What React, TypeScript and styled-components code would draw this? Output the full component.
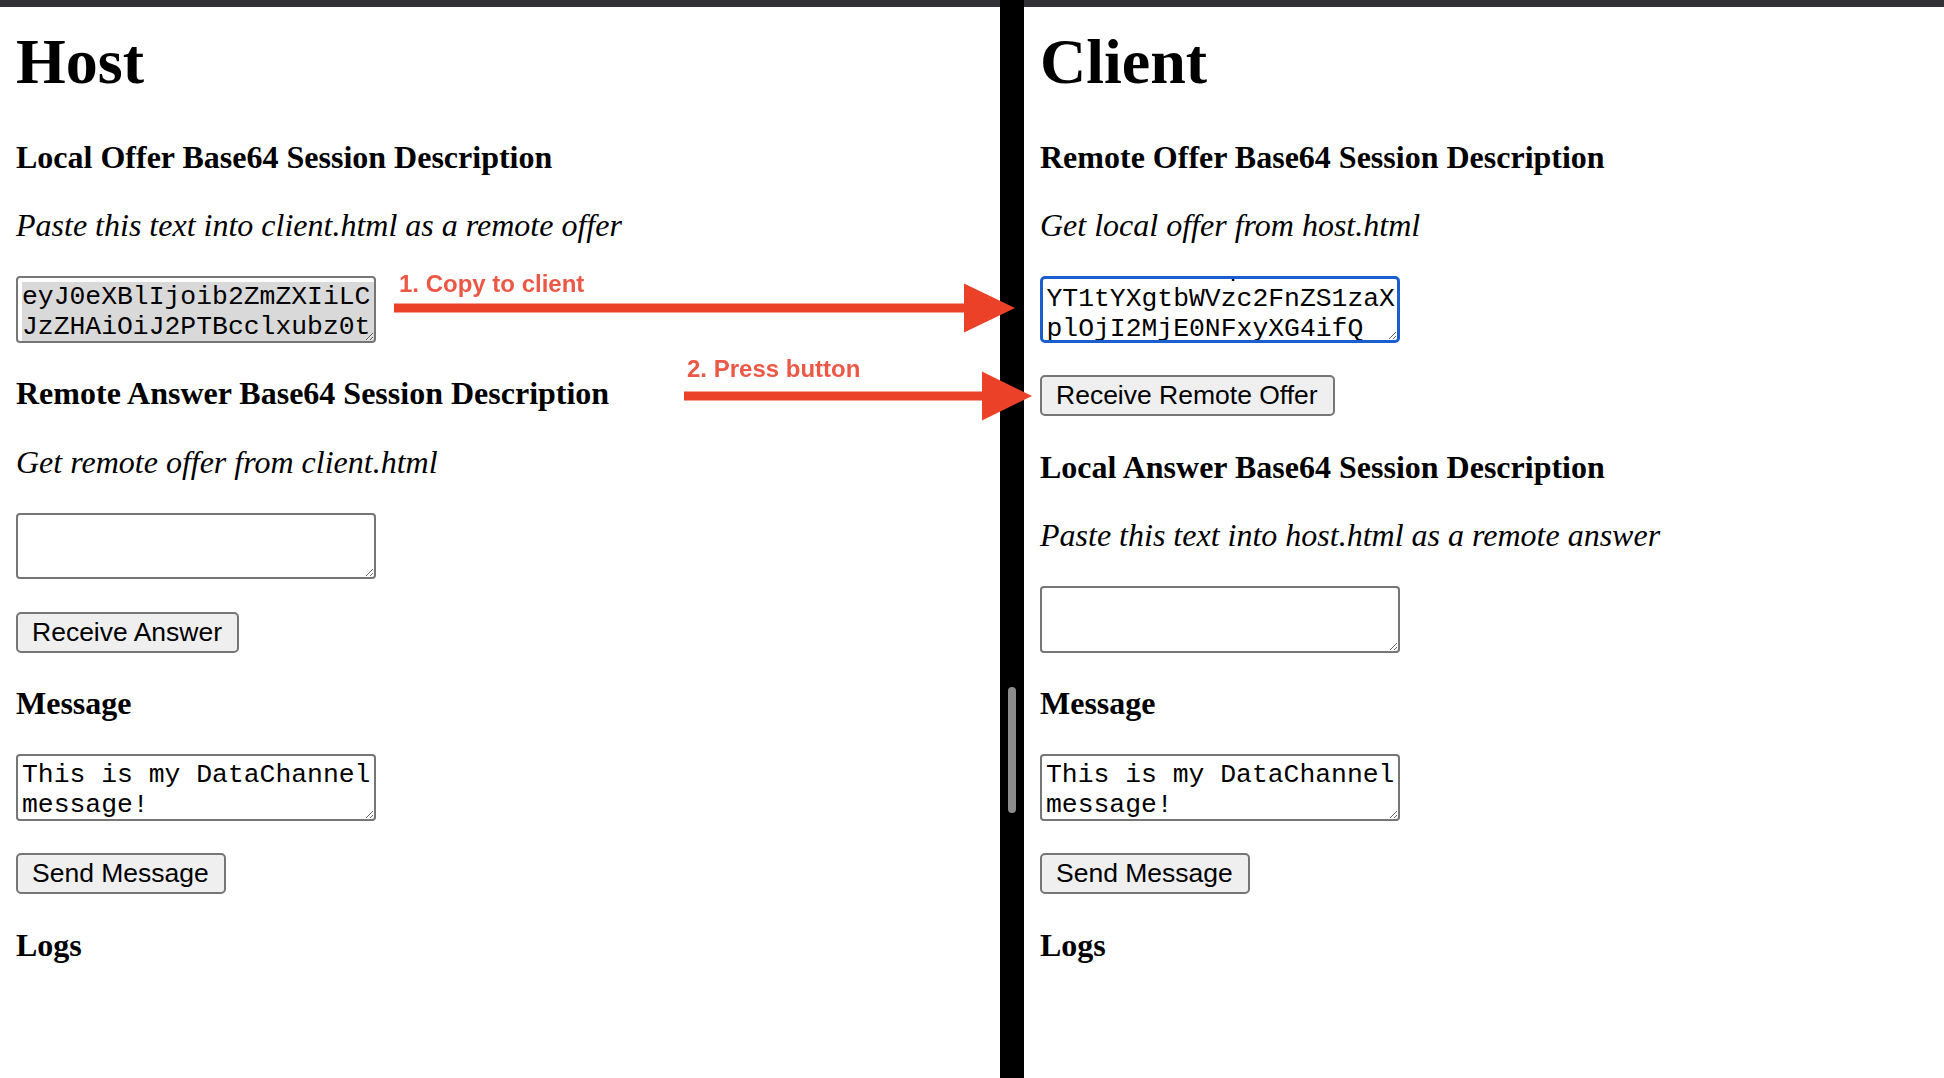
import React, { useLayoutEffect, useRef } from "react";
import styled, { createGlobalStyle, css } from "styled-components";

const GlobalStyle = createGlobalStyle`
  html, body {
    margin: 0;
    padding: 0;
    background: #ffffff;
  }
  body {
    overflow: hidden;
    font-family: "Liberation Serif", "Times New Roman", serif;
    color: #000000;
  }
  *, *::before, *::after {
    box-sizing: border-box;
  }
`;

const Page = styled.div`
  position: relative;
  display: flex;
  width: 1944px;
  height: 1078px;
  overflow: hidden;
  background: #ffffff;
`;

const Pane = styled.section<{ $width?: number }>`
  display: flex;
  flex-direction: column;
  min-width: 0;
  ${(p) => (p.$width ? css`flex: 0 0 ${p.$width}px;` : css`flex: 1 1 auto;`)}
`;

const WindowChrome = styled.div`
  flex: none;
  height: 7px;
  background: #323236;
`;

const Content = styled.div`
  display: flex;
  flex-direction: column;
  align-items: flex-start;
  gap: 32.75px;
  padding: 0 16px;
`;

const Title = styled.h1`
  margin: 19.4px 0 7.5px;
  font-size: 64px;
  line-height: 72px;
  font-weight: 700;
`;

const SectionHeading = styled.h4`
  margin: 0;
  font-size: 32px;
  line-height: 36px;
  font-weight: 700;
`;

const Hint = styled.p`
  margin: 0;
  font-size: 32px;
  line-height: 36px;
  font-style: italic;
`;

const TextBox = styled.textarea<{ $selected?: boolean; $focused?: boolean }>`
  display: block;
  width: 360px;
  height: 66.5px;
  margin: 0;
  padding: 4px 0 4px 4px;
  border: 2px solid #767676;
  border-radius: 4px;
  font-family: "Liberation Mono", "Courier New", monospace;
  font-size: 26.4px;
  line-height: 30px;
  color: #000000;
  background-color: #ffffff;
  word-break: break-all;
  overflow: hidden;
  outline: none;
  resize: both;

  ${(p) =>
    p.$selected &&
    css`
      background-image: linear-gradient(#d9d9d9, #d9d9d9);
      background-repeat: no-repeat;
      background-origin: content-box;
      background-clip: padding-box;
      background-size: 100% 200%;
    `}

  ${(p) =>
    p.$focused &&
    css`
      border: 3px solid #1b5fcf;
      border-radius: 5px;
      padding-left: 3.5px;
      caret-color: #000000;
    `}
`;

const ActionButton = styled.button`
  appearance: none;
  display: inline-flex;
  align-items: center;
  height: 40.5px;
  margin: 0;
  padding: 0 15px 0 14px;
  border: 2px solid #767676;
  border-radius: 5px;
  background: #efefef;
  color: #000000;
  font-family: "Liberation Sans", Arial, Helvetica, sans-serif;
  font-size: 26.5px;
  line-height: normal;
  white-space: nowrap;
  cursor: default;
`;

const Divider = styled.div`
  flex: 0 0 24px;
  display: flex;
  flex-direction: column;
  align-items: center;
  background: #000000;
`;

const ScrollThumb = styled.div`
  width: 8px;
  height: 126px;
  margin-top: 687px;
  border-radius: 4px;
  background: #8c8c8c;
`;

const AnnotationLayer = styled.div`
  position: absolute;
  inset: 0;
  pointer-events: none;
`;

const CalloutLabel = styled.span<{ $x: number; $y: number }>`
  position: absolute;
  left: ${(p) => p.$x}px;
  top: ${(p) => p.$y}px;
  font-family: "Liberation Sans", Arial, Helvetica, sans-serif;
  font-weight: 700;
  font-size: 24px;
  line-height: 24px;
  color: #ec5846;
  white-space: nowrap;
`;

const ArrowCanvas = styled.svg`
  position: absolute;
  left: 0;
  top: 0;
`;

const OFFER_TAIL =
  "LTQzNWYtYjhiNy0xZjQ2ZGNlYmEwZmFcclxuYT1pY2UtdWZyYWc6V2NQbUlSbnlFc1RqdmFHVlxyXG5hPWljZS1wd2Q6ZlBHc3N0dEpJb2VOTGFjdnVTdkdlZ2VhYkxBc2NVbGtcclxuYT1maW5nZXJwcmludDpzaGEtMjU2IDNBOkZFOjE0OkRGOjZBOjE3OjdCOjQ5OjQxOjEyOjY0OkE3OjVFOjg5OjlGOjcx";

const LOCAL_OFFER =
  "eyJ0eXBlIjoib2ZmZXIiLC" +
  "JzZHAiOiJ2PTBcclxubz0t" +
  "IDQ2NzM1MTk3MzY2OTA0MjEwNDUgMTY4NTYwNzA3MiAwIElOIElQNCAwLjAuMC4wXHJcbnM9LVxyXG50PTAgMFxy" +
  OFFER_TAIL;

const FILLER =
  "eyJ0eXBlIjoib2ZmZXIiLCJzZHAiOiJ2PTBcclxubz0tIDQ2NzM1MTk3MzY2OTA0MjEwNDUgMTY4NTYwNzA3MiAwIElOIElQNCAwLjAuMC4wXHJcbnM9LVxyXG50PTAgMFxyXG5hPWdyb3VwOkJVTkRMRSAwXHJcbm09YXBwbGljYXRpb24gOSBVRFAvRFRMUy9TQ1RQIHdlYnJ0Yy1kYXRhY2hhbm5lbFxyXG5jPUlOIElQNCAwLjAuMC4wXHJcbmE9c2V0dXA6YWN0cGFzc1xyXG5hPW1pZDowXHJcbmE9c2VuZHJlY3ZcclxuYT1zY3RwLXBvcn";

const chunk = (s: string, n: number) => {
  const out: string[] = [];
  for (let i = 0; i + n <= s.length; i += n) out.push(s.slice(i, i + n));
  return out;
};

const REMOTE_LINES = [
  ...chunk(FILLER, 22),
  "dHAtcG9ZdDEqNTAwMFxJXG",
  "YT1tYXgtbWVzc2FnZS1zaX",
  "plOjI2MjE0NFxyXG4ifQ",
];
const REMOTE_OFFER = REMOTE_LINES.join("");

const MESSAGE = "This is my DataChannel message!";

const Arrows: React.FC = () => (
  <ArrowCanvas width={1944} height={1078} viewBox="0 0 1944 1078">
    <g fill="#eb4128">
      <rect x={394} y={303.5} width={572} height={9} />
      <polygon points="964,283.5 1015,308 964,332.5" />
      <rect x={684} y={391.5} width={300} height={9} />
      <polygon points="982,371.5 1032,396 982,420.5" />
    </g>
  </ArrowCanvas>
);

const HostPane: React.FC = () => (
  <Pane $width={1000}>
    <WindowChrome />
    <Content>
      <Title>Host</Title>
      <SectionHeading>Local Offer Base64 Session Description</SectionHeading>
      <Hint>Paste this text into client.html as a remote offer</Hint>
      <TextBox $selected readOnly defaultValue={LOCAL_OFFER} spellCheck={false} />
      <SectionHeading>Remote Answer Base64 Session Description</SectionHeading>
      <Hint>Get remote offer from client.html</Hint>
      <TextBox defaultValue="" spellCheck={false} />
      <ActionButton type="button">Receive Answer</ActionButton>
      <SectionHeading>Message</SectionHeading>
      <TextBox defaultValue={MESSAGE} spellCheck={false} />
      <ActionButton type="button">Send Message</ActionButton>
      <SectionHeading>Logs</SectionHeading>
    </Content>
  </Pane>
);

const ClientPane: React.FC = () => {
  const offerRef = useRef<HTMLTextAreaElement>(null);

  useLayoutEffect(() => {
    const el = offerRef.current;
    if (!el) return;
    try {
      el.focus({ preventScroll: true });
      el.setSelectionRange(el.value.length, el.value.length);
    } catch {
      /* ignore */
    }
    el.scrollTop = 30 * (REMOTE_LINES.length - 2) - 1;
  }, []);

  return (
    <Pane>
      <WindowChrome />
      <Content>
        <Title>Client</Title>
        <SectionHeading>Remote Offer Base64 Session Description</SectionHeading>
        <Hint>Get local offer from host.html</Hint>
        <TextBox ref={offerRef} $focused defaultValue={REMOTE_OFFER} spellCheck={false} />
        <ActionButton type="button">Receive Remote Offer</ActionButton>
        <SectionHeading>Local Answer Base64 Session Description</SectionHeading>
        <Hint>Paste this text into host.html as a remote answer</Hint>
        <TextBox readOnly defaultValue="" spellCheck={false} />
        <SectionHeading>Message</SectionHeading>
        <TextBox defaultValue={MESSAGE} spellCheck={false} />
        <ActionButton type="button">Send Message</ActionButton>
        <SectionHeading>Logs</SectionHeading>
      </Content>
    </Pane>
  );
};

export default function App() {
  return (
    <>
      <GlobalStyle />
      <Page>
        <HostPane />
        <Divider>
          <ScrollThumb />
        </Divider>
        <ClientPane />
        <AnnotationLayer>
          <Arrows />
          <CalloutLabel $x={399} $y={272}>1. Copy to client</CalloutLabel>
          <CalloutLabel $x={687} $y={356.5}>2. Press button</CalloutLabel>
        </AnnotationLayer>
      </Page>
    </>
  );
}
